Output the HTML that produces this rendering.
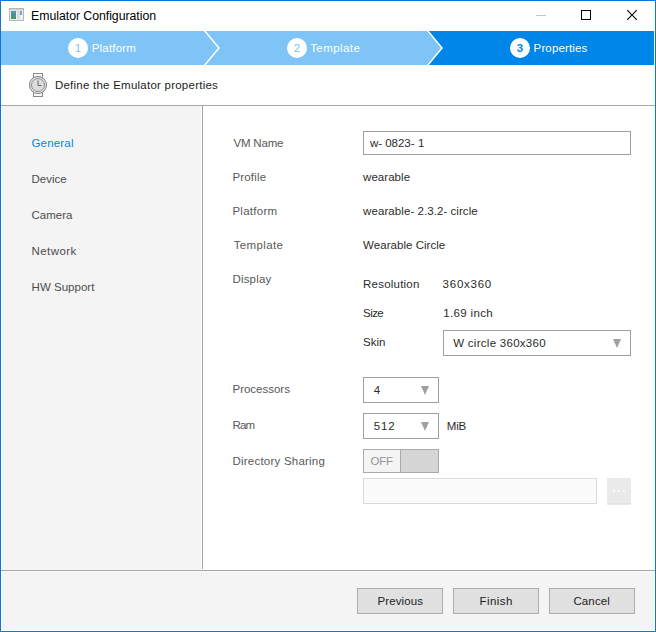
<!DOCTYPE html>
<html>
<head>
<meta charset="utf-8">
<title>Emulator Configuration</title>
<style>
html,body{margin:0;padding:0;}
body{width:656px;height:632px;overflow:hidden;background:#fff;font-family:"Liberation Sans",sans-serif;font-size:11.5px;color:#222;}
#win{position:absolute;left:0;top:0;width:656px;height:632px;background:#fff;overflow:hidden;}
#frame{position:absolute;left:0;top:0;width:654px;height:630px;border:1px solid #0a78d7;}
.a{position:absolute;}
.t{position:absolute;white-space:nowrap;line-height:14px;}
.num{position:absolute;width:20px;height:20px;border-radius:10px;background:#fff;top:38px;text-align:center;font-size:11.5px;line-height:20px;}
.box{position:absolute;border:1px solid #a0a0a0;background:#fff;box-sizing:border-box;}
.btn{position:absolute;top:588px;width:86px;height:26px;box-sizing:border-box;border:1px solid #adadad;background:#e1e1e1;}
.arrow{position:absolute;width:0;height:0;border-left:4px solid transparent;border-right:4px solid transparent;border-top:9px solid #a0a0a0;}
.dot{position:absolute;width:2px;height:2px;background:#fafafa;top:490px;}
</style>
</head>
<body>
<div id="win">
  <!-- title bar -->
  <svg class="a" style="left:9px;top:8px" width="15" height="13" viewBox="0 0 15 13">
    <rect x="0.5" y="0.5" width="14" height="12" fill="#f0f0f0" stroke="#b4b6b8"/>
    <rect x="1" y="1" width="13" height="1.5" fill="#d0d2d4"/>
    <defs><linearGradient id="g" x1="0" y1="0" x2="0" y2="1"><stop offset="0" stop-color="#5f8fb8"/><stop offset="1" stop-color="#3f9a62"/></linearGradient></defs>
    <rect x="2" y="3" width="5" height="8" fill="url(#g)"/>
    <rect x="8" y="3" width="3" height="8" fill="#dcdcdc"/>
    <rect x="11" y="3" width="2" height="4" fill="#7aa7c8"/>
  </svg>
  <div class="t" style="left:31.1px;top:9px;font-size:12.3px;letter-spacing:-0.04px;color:#000;">Emulator Configuration</div>
  <svg class="a" style="left:528px;top:0" width="126" height="31" viewBox="0 0 126 31">
    <rect x="8" y="15" width="10" height="1" fill="#c8c8c8"/>
    <rect x="53.5" y="10.500" width="9" height="9" fill="none" stroke="#000" stroke-width="1"/>
    <path d="M99.2 10.2 L108.8 19.8 M108.8 10.2 L99.2 19.8" stroke="#000" stroke-width="1.100" fill="none"/>
  </svg>

  <!-- step bar -->
  <svg class="a" style="left:1px;top:31px" width="653" height="34" viewBox="0 0 653 34">
    <rect x="0" y="0" width="653" height="34" fill="#7fc4f6"/>
    <polygon points="427,0 441.300,17 427,34 653,34 653,0" fill="#0086e9"/>
    <polyline points="203.400,-0.500 218,17 203.400,34.500" fill="none" stroke="#fff" stroke-width="1.500"/>
    <polyline points="426.500,-0.500 441,17 426.500,34.500" fill="none" stroke="#fff" stroke-width="1.500"/>
  </svg>
  <div class="num" style="left:68px;color:#7fc4f6;">1</div>
  <div class="t" style="left:91.7px;top:41px;font-size:11.5px;letter-spacing:0.20px;color:#fff;">Platform</div>
  <div class="num" style="left:287px;color:#7fc4f6;">2</div>
  <div class="t" style="left:310.2px;top:41px;font-size:11.5px;letter-spacing:0.43px;color:#fff;">Template</div>
  <div class="num" style="left:510px;color:#0086e9;font-weight:bold;">3</div>
  <div class="t" style="left:533.6px;top:41px;font-size:11.5px;letter-spacing:0.13px;color:#fff;">Properties</div>

  <!-- description -->
  <svg class="a" style="left:28px;top:72px" width="20" height="26" viewBox="0 0 20 26">
    <rect x="5.500" y="1.500" width="9" height="5" fill="#f6f6f6" stroke="#8a8a8a"/>
    <rect x="5.500" y="19.500" width="9" height="5" fill="#f6f6f6" stroke="#8a8a8a"/>
    <circle cx="10" cy="13" r="8.500" fill="#ededed" stroke="#7a7a7a"/>
    <circle cx="10" cy="13" r="6.500" fill="#dcdcdc" stroke="#8a8a8a"/>
    <path d="M10 8.500 V13.500 H13.500" fill="none" stroke="#666" stroke-width="1"/>
  </svg>
  <div class="t" style="left:54.9px;top:78px;font-size:11.5px;letter-spacing:0.24px;color:#222;">Define the Emulator properties</div>

  <div class="a" style="left:1px;top:105px;width:654px;height:1px;background:#a6a6a6;"></div>
  <div class="a" style="left:2px;top:106px;width:199px;height:464px;background:#f4f4f4;border-bottom:1px solid #f9f9f9;box-sizing:border-box;"></div>
  <div class="a" style="left:202px;top:106px;width:1px;height:463px;background:#a6a6a6;"></div>
  <div class="a" style="left:1px;top:570px;width:654px;height:1px;background:#a6a6a6;"></div>
  <div class="a" style="left:2px;top:571px;width:652px;height:59px;background:#f4f4f4;border-top:1px solid #f9f9f9;box-sizing:border-box;"></div>

  <!-- nav -->
  <div class="t" style="left:31.4px;top:136px;font-size:11.5px;letter-spacing:0.20px;color:#0086e9;">General</div>
  <div class="t" style="left:31.4px;top:172px;font-size:11.5px;letter-spacing:0.04px;color:#4c4c4c;">Device</div>
  <div class="t" style="left:31.4px;top:208px;font-size:11.5px;letter-spacing:0.04px;color:#4c4c4c;">Camera</div>
  <div class="t" style="left:31.6px;top:244px;font-size:11.5px;letter-spacing:0.40px;color:#4c4c4c;">Network</div>
  <div class="t" style="left:31.6px;top:280px;font-size:11.5px;letter-spacing:0.02px;color:#4c4c4c;">HW Support</div>

  <!-- form -->
  <div class="t" style="left:233.4px;top:136px;font-size:11.5px;letter-spacing:-0.17px;color:#585858;">VM Name</div>
  <div class="box" style="left:363px;top:131px;width:268px;height:24px;"></div>
  <div class="t" style="left:370px;top:136px;color:#2b2b2b;">w-<span style="margin-left:3px">0823-</span><span style="margin-left:3.500px">1</span></div>

  <div class="t" style="left:232.4px;top:170px;font-size:11.5px;letter-spacing:0.18px;color:#585858;">Profile</div>
  <div class="t" style="left:363.1px;top:170px;font-size:11.5px;letter-spacing:0.04px;color:#2b2b2b;">wearable</div>

  <div class="t" style="left:232.4px;top:204px;font-size:11.5px;letter-spacing:0.27px;color:#585858;">Platform</div>
  <div class="t" style="left:363px;top:204px;color:#2b2b2b;letter-spacing:0.1px">wearable-<span style="margin-left:3px">2.3.2-</span><span style="margin-left:3px">circle</span></div>

  <div class="t" style="left:233.7px;top:238px;font-size:11.5px;letter-spacing:0.37px;color:#585858;">Template</div>
  <div class="t" style="left:363.1px;top:238px;font-size:11.5px;letter-spacing:0.04px;color:#2b2b2b;">Wearable Circle</div>

  <div class="t" style="left:232.5px;top:272px;font-size:11.5px;letter-spacing:0.17px;color:#585858;">Display</div>
  <div class="t" style="left:363.1px;top:277px;font-size:11.5px;letter-spacing:0.21px;color:#2b2b2b;">Resolution</div>
  <div class="t" style="left:442.6px;top:277px;font-size:11.5px;letter-spacing:0.75px;color:#2b2b2b;">360x360</div>
  <div class="t" style="left:363.1px;top:306px;font-size:11.5px;letter-spacing:-0.57px;color:#2b2b2b;">Size</div>
  <div class="t" style="left:443.2px;top:306px;font-size:11.5px;letter-spacing:0.35px;color:#2b2b2b;">1.69 inch</div>
  <div class="t" style="left:363.1px;top:335px;font-size:11.5px;letter-spacing:-0.06px;color:#2b2b2b;">Skin</div>
  <div class="box" style="left:443px;top:330px;width:188px;height:26px;"></div>
  <div class="t" style="left:453.2px;top:336px;font-size:11.5px;letter-spacing:0.28px;color:#2b2b2b;">W circle 360x360</div>
  <div class="arrow" style="left:613px;top:339px;"></div>

  <div class="t" style="left:232.5px;top:382px;font-size:11.5px;letter-spacing:-0.01px;color:#585858;">Processors</div>
  <div class="box" style="left:363px;top:377px;width:76px;height:26px;"></div>
  <div class="t" style="left:373.8px;top:383px;font-size:11.5px;letter-spacing:0.00px;color:#2b2b2b;">4</div>
  <div class="arrow" style="left:421px;top:386px;"></div>

  <div class="t" style="left:232.5px;top:418px;font-size:11.5px;letter-spacing:-0.90px;color:#585858;">Ram</div>
  <div class="box" style="left:363px;top:413px;width:76px;height:26px;"></div>
  <div class="t" style="left:373.8px;top:419px;font-size:11.5px;letter-spacing:0.80px;color:#2b2b2b;">512</div>
  <div class="arrow" style="left:421px;top:422px;"></div>
  <div class="t" style="left:446.8px;top:419px;font-size:11.5px;letter-spacing:-0.25px;color:#2b2b2b;">MiB</div>

  <div class="t" style="left:232.5px;top:454px;font-size:11.5px;letter-spacing:0.22px;color:#585858;">Directory Sharing</div>
  <div class="box" style="left:363px;top:449px;width:76px;height:24px;background:#f4f4f4;border-color:#aaa;"></div>
  <div class="a" style="left:400px;top:450px;width:38px;height:22px;background:#d5d5d5;border-left:1px solid #aaa;box-sizing:border-box;"></div>
  <div class="t" style="left:370.4px;top:454px;font-size:11.5px;letter-spacing:-0.20px;color:#959595;">OFF</div>
  <div class="box" style="left:363px;top:478px;width:234px;height:26px;background:#fbfbfb;border-color:#dadada;"></div>
  <div class="a" style="left:607px;top:478px;width:24px;height:27px;background:#eaeaea;"></div>
  <div class="a" style="left:607px;top:503px;width:24px;height:1px;background:#e3e3e3;"></div>
  <div class="dot" style="left:613px"></div><div class="dot" style="left:618px"></div><div class="dot" style="left:623px"></div>

  <!-- buttons -->
  <div class="btn" style="left:357px;"></div>
  <div class="btn" style="left:453px;"></div>
  <div class="btn" style="left:549px;"></div>
  <div class="t" style="left:377.4px;top:594px;font-size:11.5px;letter-spacing:0.13px;color:#222;">Previous</div>
  <div class="t" style="left:479.5px;top:594px;font-size:11.5px;letter-spacing:0.42px;color:#222;">Finish</div>
  <div class="t" style="left:573.4px;top:594px;font-size:11.5px;letter-spacing:0.14px;color:#222;">Cancel</div>
  <div id="frame"></div>
</div>
</body>
</html>
